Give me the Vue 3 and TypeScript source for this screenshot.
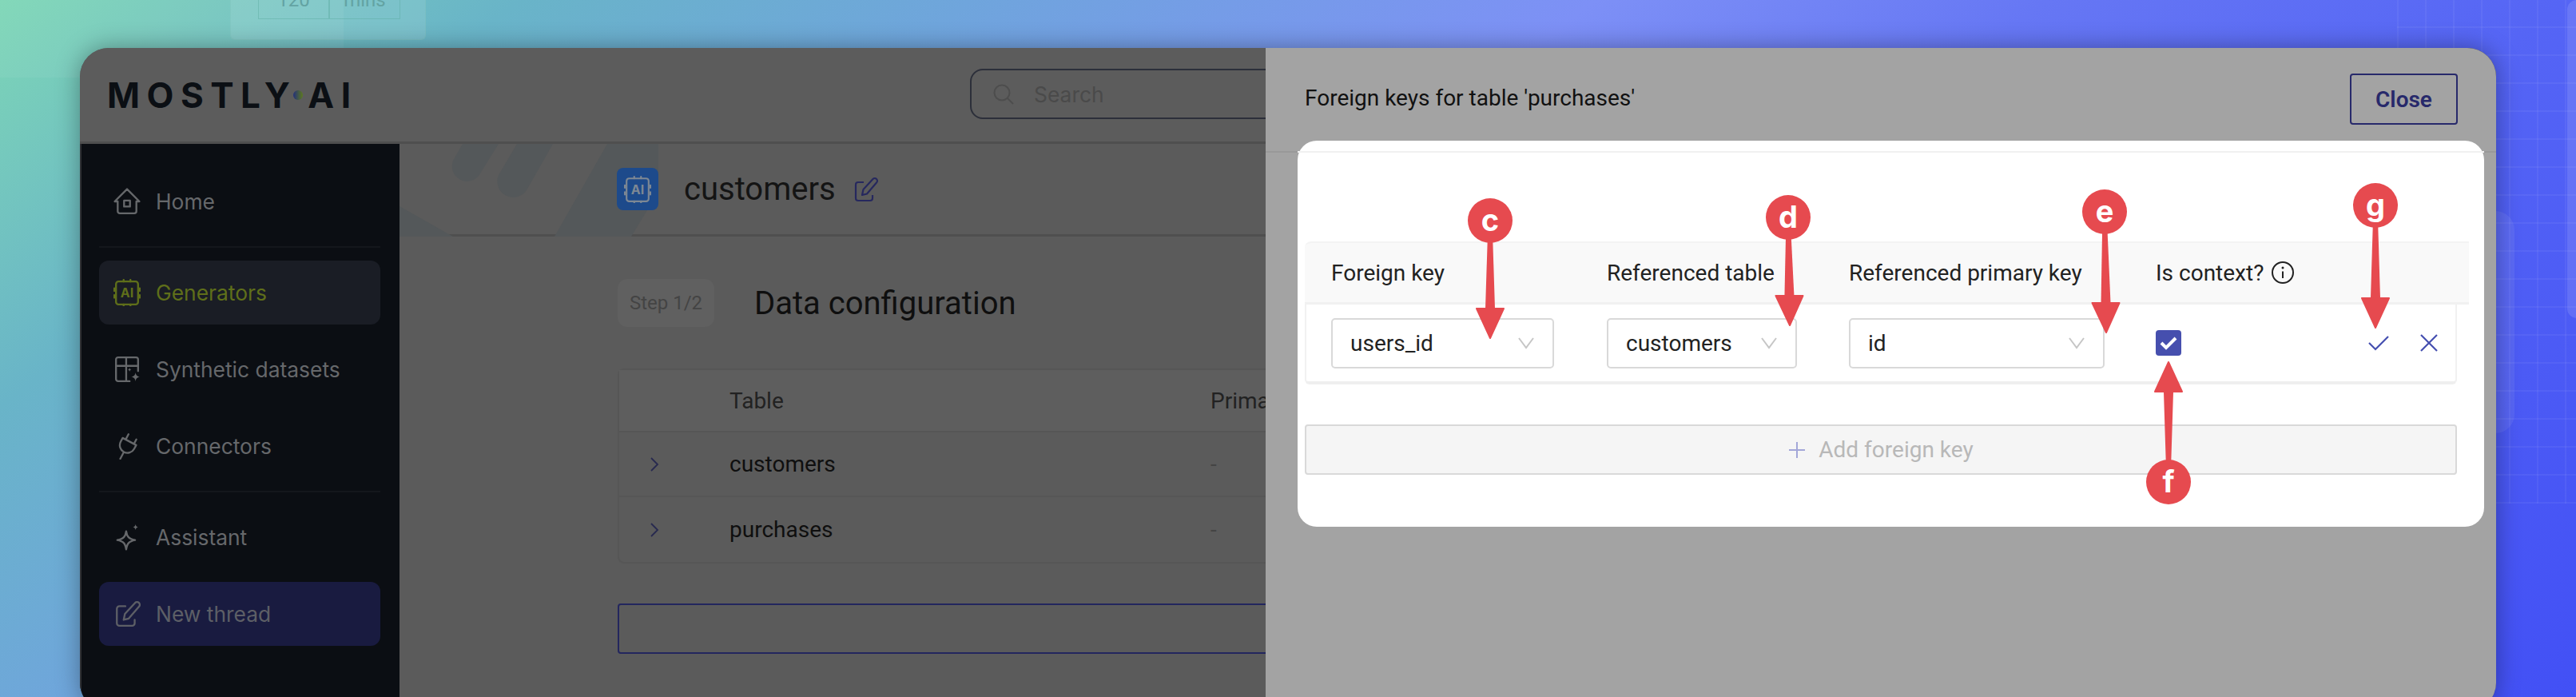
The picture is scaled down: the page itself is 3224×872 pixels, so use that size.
<template>
  <div class="canvas">
    <!-- background page peeking out behind the window -->
    <div class="bg-top"></div>
    <div class="bg-card">
      <div class="bg-cell"><span>120</span></div>
      <div class="bg-cell"><span>mins</span></div>
    </div>
    <div class="bg-grid"></div>
    <div class="bg-side"></div>
    <div class="bg-edge"></div>

    <div class="window">
      <header class="topbar">
        <div class="logo">
          <span>MOSTLY</span>
          <i class="logo-dot"></i>
          <span>AI</span>
        </div>
        <div class="search">
          <svg width="28" height="28" viewBox="0 0 28 28" fill="none" stroke="#4d4d4d" stroke-width="2">
            <circle cx="12" cy="12" r="9.5" />
            <path d="M19 19l7 7" />
          </svg>
          <span>Search</span>
        </div>
      </header>

      <div class="body">
        <nav class="sidebar">
          <template v-for="item in nav" :key="item.label">
            <div v-if="item.dividerBefore" class="nav-divider"></div>
            <div class="nav-item" :class="item.kind ? `nav-item--${item.kind}` : ''">
              <svg class="nav-icon" width="34" height="34" viewBox="0 0 32 32" fill="none" stroke="currentColor" stroke-width="2.2" stroke-linejoin="round" stroke-linecap="round">
                <template v-if="item.icon === 'home'">
                  <path d="M1.5 16L16 1.5 30.5 16H27v11.5a2.5 2.5 0 0 1-2.5 2.5h-17A2.5 2.5 0 0 1 5 27.500V16z" />
                  <rect x="12.500" y="15" width="7" height="7" />
                </template>
                <template v-else-if="item.icon === 'chip'">
                  <rect x="3" y="3" width="26" height="27" rx="3" />
                  <path d="M1 11v3M1 19v3M31 11v3M31 19v3M12 1v2M20 1v2M12 30v2M20 30v2" />
                  <text x="16" y="22" class="chip-text" fill="currentColor" stroke="none">AI</text>
                </template>
                <template v-else-if="item.icon === 'table'">
                  <path d="M19 30H5.500A2.500 2.500 0 0 1 3 27.500v-23A2.500 2.500 0 0 1 5.500 2h21A2.500 2.500 0 0 1 29 4.500V18M3 12h26M15 2v28" />
                  <path d="M26 20c.6 3 1.600 4.200 5 5-3.400.800-4.400 2-5 5-.6-3-1.600-4.200-5-5 3.400-.800 4.400-2 5-5z" fill="currentColor" stroke="none" />
                  <path d="M19 14c.3 1.500.8 2 2.200 2.400-1.400.4-1.900.9-2.200 2.400-.3-1.500-.8-2-2.200-2.400 1.400-.4 1.900-.9 2.200-2.400z" fill="currentColor" stroke="none" />
                </template>
                <template v-else-if="item.icon === 'plug'">
                  <g transform="rotate(28 16 16)">
                    <path d="M11 3v7M22 4v6M7 10h18v5a9 9 0 0 1-18 0zM16 24v9" />
                  </g>
                </template>
                <template v-else-if="item.icon === 'spark'">
                  <path d="M15 9c1 6.500 3 9 10.500 10.500C18 21 16 23.500 15 30.500 14 23.500 12 21 4.500 19.500 12 18 14 15.500 15 9z" />
                  <path d="M26 1c.4 2 1 2.700 3 3.300-2 .6-2.600 1.300-3 3.300-.4-2-1-2.700-3-3.300 2-.6 2.600-1.300 3-3.300z" fill="currentColor" stroke="none" />
                </template>
                <template v-else>
                  <path d="M14 7H7a3 3 0 0 0-3 3v17a3 3 0 0 0 3 3h15a3 3 0 0 0 3-3v-4" />
                  <path d="M12 23l1.500-7L25.500 3a3 3 0 0 1 4.500 4.500L18 21.500z" />
                </template>
              </svg>
              <span>{{ item.label }}</span>
            </div>
          </template>
        </nav>

        <main class="main">
          <div class="banner">
            <svg class="banner-art" width="2000" height="116" viewBox="500 180 2000 116" fill="#54585a">
              <path d="M624 180L601 217a18 18 0 0 1-33-18l11-19z" />
              <path d="M692 180L659 238a20 20 0 0 1-35-19l23-39z" />
              <path d="M760 180L694 296H790L824 240V180z" />
              <path d="M500 258L567 296H500z" />
            </svg>
            <div class="banner-icon">
              <svg width="34" height="34" viewBox="0 0 32 32" fill="none" stroke="#7e8894" stroke-width="2" stroke-linecap="round">
                <rect x="3" y="3" width="26" height="27" rx="3" />
                <path d="M1 11v3M1 19v3M31 11v3M31 19v3M12 1v2M20 1v2M12 30v2M20 30v2" />
                <text x="16" y="22" class="chip-text" fill="#7e8894" stroke="none">AI</text>
              </svg>
            </div>
            <h1 class="gen-name">customers</h1>
            <svg width="32" height="34" viewBox="0 0 32 32" fill="none" stroke="#26285e" stroke-width="2.200" stroke-linejoin="round">
              <path d="M14 7H7a3 3 0 0 0-3 3v17a3 3 0 0 0 3 3h15a3 3 0 0 0 3-3v-4" />
              <path d="M12 23l1.500-7L25.500 3a3 3 0 0 1 4.500 4.500L18 21.500z" />
            </svg>
          </div>

          <div class="content">
            <div class="step-row">
              <span class="step-pill">Step 1/2</span>
              <h2 class="step-title">Data configuration</h2>
            </div>

            <div class="tables">
              <div class="tables-row tables-row--head">
                <span></span>
                <span>Table</span>
                <span>Primary key</span>
              </div>
              <div v-for="name in tableNames" :key="name" class="tables-row">
                <svg width="12" height="20" viewBox="0 0 12 20" fill="none" stroke="#27294f" stroke-width="1.800">
                  <path d="M2 2l8 8-8 8" />
                </svg>
                <span>{{ name }}</span>
                <span class="dash">-</span>
              </div>
            </div>

            <div class="outline-btn"></div>
          </div>
        </main>
      </div>

      <!-- side panel on top of the dimmed page -->
      <aside class="panel">
        <div class="panel-rule"></div>
        <div class="panel-head">
          <span class="panel-title">Foreign keys for table 'purchases'</span>
          <button class="close-btn" type="button">Close</button>
        </div>

        <section class="card">
          <div class="card-rule"></div>

          <div class="fk-head fk-grid">
            <span>Foreign key</span>
            <span>Referenced table</span>
            <span>Referenced primary key</span>
            <span class="ctx-label">
              Is context?
              <svg width="30" height="30" viewBox="0 0 30 30" fill="none" stroke="#222" stroke-width="2">
                <circle cx="15" cy="15" r="13" />
                <path d="M15 13.500V22" />
                <circle cx="15" cy="9" r="1.500" fill="#222" stroke="none" />
              </svg>
            </span>
          </div>

          <div class="fk-row fk-grid">
            <div v-for="sel in selects" :key="sel.value" class="select" :style="{ width: sel.width + 'px' }">
              <span>{{ sel.value }}</span>
              <svg width="22" height="16" viewBox="0 0 22 16" fill="none" stroke="#c6c6c6" stroke-width="2">
                <path d="M2 2l9 12 9-12" />
              </svg>
            </div>
            <div class="fk-last">
              <span class="checkbox">
                <svg width="22" height="18" viewBox="0 0 22 18" fill="none" stroke="#fff" stroke-width="4">
                  <path d="M2 9l6 6L20 3" />
                </svg>
              </span>
              <div class="fk-actions">
                <svg width="26" height="20" viewBox="0 0 26 20" fill="none" stroke="#454fb0" stroke-width="2.200">
                  <path d="M1 10l8 8L25 2" />
                </svg>
                <svg width="22" height="22" viewBox="0 0 22 22" fill="none" stroke="#454fb0" stroke-width="2.200">
                  <path d="M1 1l20 20M21 1L1 21" />
                </svg>
              </div>
            </div>
          </div>

          <div class="add-btn">
            <svg width="22" height="22" viewBox="0 0 22 22" fill="none" stroke="#a3a7d8" stroke-width="2">
              <path d="M11 1v20M1 11h20" />
            </svg>
            <span>Add foreign key</span>
          </div>
        </section>
      </aside>
    </div>

    <!-- red callouts drawn over the screenshot -->
    <svg class="callouts" width="3224" height="872" viewBox="0 0 3224 872">
      <g v-for="c in callouts" :key="c.label">
        <polygon :points="c.shaft" fill="#e64a4f" />
        <polygon :points="c.head" fill="#e64a4f" stroke="#e64a4f" stroke-width="2" stroke-linejoin="round" />
        <circle :cx="c.x" :cy="c.y" r="28" fill="#e64a4f" />
        <text :x="c.x" :y="c.y + 13" class="callout-text">{{ c.label }}</text>
      </g>
    </svg>
  </div>
</template>

<script setup lang="ts">
interface NavItem {
  label: string;
  icon: string;
  kind?: 'active' | 'cta';
  dividerBefore?: boolean;
}

const nav: NavItem[] = [
  { label: 'Home', icon: 'home' },
  { label: 'Generators', icon: 'chip', kind: 'active', dividerBefore: true },
  { label: 'Synthetic datasets', icon: 'table' },
  { label: 'Connectors', icon: 'plug' },
  { label: 'Assistant', icon: 'spark', dividerBefore: true },
  { label: 'New thread', icon: 'pencil', kind: 'cta' },
];

const tableNames = ['customers', 'purchases'];

const selects = [
  { value: 'users_id', width: 279 },
  { value: 'customers', width: 238 },
  { value: 'id', width: 320 },
];

// circle centre, arrow tip
const rawCallouts = [
  { label: 'c', x: 1865, y: 276, tipX: 1865, tipY: 423 },
  { label: 'd', x: 2238, y: 272, tipX: 2240, tipY: 407 },
  { label: 'e', x: 2634, y: 265, tipX: 2636, tipY: 416 },
  { label: 'g', x: 2973, y: 257, tipX: 2973, tipY: 410 },
  { label: 'f', x: 2714, y: 603, tipX: 2714, tipY: 453 },
];

const callouts = rawCallouts.map((c) => {
  const dir = c.tipY > c.y ? 1 : -1;
  const baseY = c.tipY - dir * 37;
  const baseX = c.tipX - ((c.tipX - c.x) * 37) / Math.abs(c.tipY - c.y);
  return {
    ...c,
    shaft: `${c.x - 2.5},${c.y} ${c.x + 2.5},${c.y} ${baseX + 6},${baseY} ${baseX - 6},${baseY}`,
    head: `${c.tipX},${c.tipY} ${baseX - 17},${baseY} ${baseX + 17},${baseY}`,
  };
});
</script>

<style>
html,
body {
  margin: 0;
  background: #4250f5;
}
</style>

<style scoped>
.canvas {
  position: relative;
  width: 3224px;
  height: 872px;
  overflow: hidden;
  font-family: Roboto, 'Liberation Sans', sans-serif;
  background: linear-gradient(
    142deg,
    #7dd6b6 0%,
    #69b4c8 15%,
    #6fa5dc 28%,
    #7d90f6 46%,
    #6677f4 59%,
    #5565f5 74%,
    #4250f5 100%
  );
}

/* background leftovers ---------------------------------- */
.bg-top {
  position: absolute;
  left: 0;
  top: 0;
  width: 430px;
  height: 97px;
  background: rgba(255, 255, 255, 0.05);
}

.bg-card {
  position: absolute;
  left: 288px;
  top: -10px;
  width: 245px;
  height: 60px;
  box-sizing: border-box;
  padding-left: 34px;
  display: flex;
  align-items: flex-start;
  background: rgba(255, 255, 255, 0.1);
  border: 1px solid rgba(120, 190, 180, 0.3);
  border-radius: 6px;
}

.bg-cell {
  width: 87px;
  height: 31px;
  display: flex;
  align-items: flex-end;
  justify-content: center;
  border: 1px solid rgba(90, 170, 160, 0.45);
  font-size: 24px;
  line-height: 26px;
  color: #63a3a3;
}

.bg-cell span {
  margin-bottom: 10px;
}

.bg-grid {
  position: absolute;
  left: 3000px;
  top: 0;
  width: 224px;
  height: 630px;
  background-image:
    repeating-linear-gradient(90deg, rgba(255, 255, 255, 0.05) 0 2px, transparent 2px 35px),
    repeating-linear-gradient(0deg, rgba(255, 255, 255, 0.05) 0 2px, transparent 2px 35px);
}

.bg-side {
  position: absolute;
  left: 3213px;
  top: 0;
  width: 30px;
  height: 398px;
  border-radius: 12px;
  background: rgba(255, 255, 255, 0.12);
}

.bg-edge {
  position: absolute;
  left: 3090px;
  top: 264px;
  width: 57px;
  height: 278px;
  border-radius: 24px;
  background: rgba(255, 255, 255, 0.07);
}

/* window ------------------------------------------------ */
.window {
  position: absolute;
  left: 100px;
  top: 60px;
  width: 3024px;
  height: 830px;
  display: flex;
  flex-direction: column;
  overflow: hidden;
  border-radius: 36px;
  background: #5b5b5b;
  box-shadow: 0 0 30px rgba(0, 0, 0, 0.35);
}

.topbar {
  flex: none;
  box-sizing: border-box;
  height: 120px;
  padding-left: 34px;
  display: flex;
  align-items: center;
  background: #5c5c5c;
  border-bottom: 3px solid #4f4f4f;
}

.logo {
  flex: none;
  width: 1080px;
  display: flex;
  align-items: center;
  font-family: Inter, sans-serif;
  font-weight: 700;
  font-size: 44px;
  line-height: 44px;
  letter-spacing: 8.5px;
  color: #0b0f14;
}

.logo-dot {
  flex: none;
  width: 12px;
  height: 12px;
  margin: 0 6px 0 -4px;
  border-radius: 50%;
  background: linear-gradient(90deg, #23307a, #5d7a1e);
}

.search {
  flex: none;
  box-sizing: border-box;
  width: 800px;
  height: 63px;
  margin-top: -2px;
  padding-left: 26px;
  display: flex;
  align-items: center;
  gap: 24px;
  border: 2px solid #2c2f3a;
  border-radius: 16px;
  font-family: Inter, sans-serif;
  font-size: 26.4px;
  color: #4a4a4a;
}

.body {
  flex: 1;
  min-height: 0;
  display: flex;
}

/* sidebar ------------------------------------------------ */
.sidebar {
  flex: none;
  box-sizing: border-box;
  width: 400px;
  padding: 32px 24px 0 22px;
  display: flex;
  flex-direction: column;
  gap: 16px;
  background: #0b0e13;
  border-left: 2px solid #2f3034;
}

.nav-item {
  flex: none;
  box-sizing: border-box;
  height: 80px;
  padding-left: 18px;
  display: flex;
  align-items: center;
  gap: 19px;
  border-radius: 12px;
  font-family: Inter, sans-serif;
  font-size: 26.4px;
  color: #66686b;
}

.nav-icon {
  flex: none;
}

.nav-item--active {
  background: #1a1d25;
  color: #5f6f1a;
}

.nav-item--cta {
  background: #191b40;
  color: #5d5f66;
}

.nav-divider {
  flex: none;
  height: 2px;
  background: #14171c;
}

.chip-text {
  font-family: Inter, sans-serif;
  font-size: 15px;
  font-weight: 700;
  text-anchor: middle;
}

/* main ---------------------------------------------------- */
.main {
  flex: 1;
  min-width: 0;
  overflow: hidden;
}

.banner {
  position: relative;
  box-sizing: border-box;
  height: 116px;
  padding-left: 272px;
  display: flex;
  align-items: center;
  border-bottom: 3px solid #4f4f4f;
}

.banner-art {
  position: absolute;
  left: 0;
  top: 0;
}

.banner-icon {
  position: relative;
  flex: none;
  width: 52px;
  height: 53px;
  margin-right: 32px;
  display: flex;
  align-items: center;
  justify-content: center;
  border-radius: 8px;
  background: #1d4a8b;
}

.gen-name {
  position: relative;
  margin: 0 21px 0 0;
  font-size: 40px;
  font-weight: 400;
  color: #141414;
}

.banner svg:last-child {
  position: relative;
}

.content {
  padding: 53px 0 0 273px;
}

.step-row {
  display: flex;
  align-items: center;
  gap: 50px;
}

.step-pill {
  flex: none;
  box-sizing: border-box;
  width: 121px;
  height: 60px;
  line-height: 60px;
  text-align: center;
  border-radius: 12px;
  background: #606060;
  font-size: 24px;
  color: #444;
}

.step-title {
  margin: 0;
  font-size: 40px;
  font-weight: 400;
  color: #0f0f0f;
}

.tables {
  width: 1600px;
  margin-top: 52px;
  border: 2px solid #565656;
  border-radius: 8px;
}

.tables-row {
  box-sizing: border-box;
  height: 81px;
  display: grid;
  grid-template-columns: 138px 602px 1fr;
  align-items: center;
  font-size: 28px;
  color: #0f0f0f;
  border-bottom: 2px solid #565656;
}

.tables-row svg {
  margin-left: 38px;
}

.tables-row:last-child {
  border-bottom: 0;
}

.tables-row--head {
  height: 78px;
  background: #5e5e5e;
  color: #222;
}

.dash {
  color: #444;
}

.outline-btn {
  box-sizing: border-box;
  width: 1600px;
  height: 63px;
  margin-top: 50px;
  border: 2px solid #23265e;
  border-radius: 4px;
}

/* side panel ---------------------------------------------- */
.panel {
  position: absolute;
  left: 1484px;
  top: 0;
  right: 0;
  bottom: 0;
  background: #a3a3a3;
  color: #111;
}

.panel-rule {
  position: absolute;
  left: 0;
  right: 0;
  top: 129px;
  height: 2px;
  background: #999;
}

.panel-head {
  position: relative;
  box-sizing: border-box;
  height: 116px;
  padding: 32px 48px 0 49px;
  display: flex;
  justify-content: space-between;
}

.panel-title {
  font-size: 28px;
  line-height: 62px;
}

.close-btn {
  box-sizing: border-box;
  width: 135px;
  height: 64px;
  padding: 0;
  background: transparent;
  border: 2px solid #27296b;
  border-radius: 4px;
  font-family: Roboto, sans-serif;
  font-size: 28px;
  font-weight: 600;
  color: #27296b;
}

.card {
  position: relative;
  box-sizing: border-box;
  width: 1485px;
  height: 483px;
  margin-left: 40px;
  padding-left: 9px;
  background: #fff;
  border-radius: 24px;
  color: #222;
}

.card-rule {
  height: 13px;
  margin-left: -9px;
  border-bottom: 2px solid #f1f1f1;
}

.fk-grid {
  box-sizing: border-box;
  display: grid;
  grid-template-columns: 345px 303px 384px 1fr;
  align-items: center;
  padding-left: 33px;
}

.fk-head {
  width: 1457px;
  height: 79px;
  margin-top: 111px;
  background: #f9f9f9;
  border-top: 2px solid #f3f3f3;
  border-radius: 8px 0 0 0;
  border-bottom: 3px solid #f1f1f1;
  font-size: 28px;
}

.ctx-label {
  display: flex;
  align-items: center;
  gap: 9px;
}

.fk-row {
  width: 1442px;
  height: 100px;
  border-left: 2px solid #f1f1f1;
  border-right: 2px solid #f1f1f1;
  border-bottom: 4px solid #efefef;
  border-radius: 0 0 6px 6px;
  padding-left: 31px;
}

.select {
  box-sizing: border-box;
  height: 63px;
  padding: 0 22px 0 22px;
  display: flex;
  align-items: center;
  justify-content: space-between;
  background: #fff;
  border: 2px solid #d9d9d9;
  border-radius: 5px;
  font-size: 28px;
}

.fk-last {
  display: flex;
  align-items: center;
  justify-content: space-between;
  padding-right: 22px;
}

.checkbox {
  width: 32px;
  height: 32px;
  display: flex;
  align-items: center;
  justify-content: center;
  border-radius: 4px;
  background: #464fae;
}

.fk-actions {
  display: flex;
  align-items: center;
  gap: 39px;
}

.add-btn {
  box-sizing: border-box;
  width: 1442px;
  height: 63px;
  margin-top: 50px;
  display: flex;
  align-items: center;
  justify-content: center;
  gap: 16px;
  background: #f5f5f5;
  border: 2px solid #d9d9d9;
  border-radius: 4px;
  font-size: 28px;
  color: #b8b8b8;
}

/* callouts ------------------------------------------------- */
.callouts {
  position: absolute;
  left: 0;
  top: 0;
  pointer-events: none;
}

.callout-text {
  font-family: Inter, sans-serif;
  font-size: 38px;
  font-weight: 700;
  fill: #fff;
  text-anchor: middle;
}
</style>
